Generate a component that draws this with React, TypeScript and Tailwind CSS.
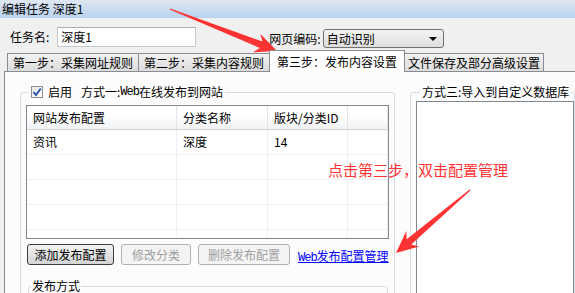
const FONT = { fontFamily: '"Noto Sans CJK SC", "Liberation Sans", sans-serif' };
const MONO = { fontFamily: '"Liberation Mono", monospace' };

type Pt = [number, number];

function arrowPoints(tail: Pt, tip: Pt) {
  const dx = tip[0] - tail[0];
  const dy = tip[1] - tail[1];
  const len = Math.hypot(dx, dy);
  const ux = dx / len;
  const uy = dy / len;
  const nx = -uy;
  const ny = ux;
  const headLen = 22;
  const headW = 10;
  const bx = tip[0] - ux * headLen;
  const by = tip[1] - uy * headLen;
  const nbx = bx + ux * 5;
  const nby = by + uy * 5;
  const p = (x: number, y: number) => `${x.toFixed(1)},${y.toFixed(1)}`;
  return [
    p(tail[0] + nx * 0.6, tail[1] + ny * 0.6),
    p(nbx + nx * 3.5, nby + ny * 3.5),
    p(bx + nx * headW, by + ny * headW),
    p(tip[0], tip[1]),
    p(bx - nx * headW, by - ny * headW),
    p(nbx - nx * 3.5, nby - ny * 3.5),
    p(tail[0] - nx * 0.6, tail[1] - ny * 0.6),
  ].join(" ");
}

const COLS = [
  { label: "网站发布配置", w: "w-[150px]" },
  { label: "分类名称", w: "w-[91px]" },
  { label: "版块/分类ID", w: "w-[80px]" },
  { label: "", w: "flex-1" },
];

const ROWS = [["资讯", "深度", "14", ""], ["", "", "", ""], ["", "", "", ""], ["", "", "", ""], ["", "", "", ""]];

function Tab({ label, active, px }: { label: string; active?: boolean; px?: string }) {
  if (active) {
    return (
      <div className="h-[22px] -mb-px px-[7px] border border-b-0 border-[#898c95] bg-white flex items-center relative z-10 -mr-px">
        {label}
      </div>
    );
  }
  return (
    <div className={`h-[18px] ${px ?? "px-[5px]"} border border-b-0 border-[#898c95] bg-gradient-to-b from-[#f2f2f2] to-[#dcdcdc] flex items-center -mr-px`}>
      {label}
    </div>
  );
}

function Btn({ label, w, disabled, def }: { label: string; w: string; disabled?: boolean; def?: boolean }) {
  const cls = disabled
    ? "border-[#adb2b5] bg-[#f4f4f4] text-[#a0a0a0]"
    : def
      ? "border-[#3c3c3c] bg-gradient-to-b from-[#f2f2f2] to-[#d4d4d4] text-black"
      : "border-[#707070] bg-gradient-to-b from-[#f2f2f2] to-[#dcdcdc] text-black";
  return (
    <div className={`h-[21px] ${w} rounded-[3px] border flex items-center justify-center ${cls}`}>{label}</div>
  );
}

export default function App() {
  return (
    <div className="w-[575px] h-[293px] overflow-hidden bg-[#f0f0f0] relative text-[12px] text-black leading-none" style={FONT}>
      {/* title bar */}
      <div className="h-[18px] bg-gradient-to-b from-[#dfe7f1] to-[#b8d2ee] flex items-center pl-[2px]">编辑任务 深度1</div>

      {/* name + encoding */}
      <div className="flex items-center pt-[7px] h-[31px]">
        <span className="ml-[10px]">任务名:</span>
        <div className="ml-[8px] w-[139px] h-[20px] bg-white border border-[#c5c9d0] border-t-[#abadb3] flex items-center pl-[3px]">深度1</div>
        <span className="ml-[73px] mt-[3px]">网页编码:</span>
        <div className="ml-[2px] mt-[3px] w-[121px] h-[19px] rounded-[3px] border border-[#707070] bg-gradient-to-b from-[#f4f4f4] to-[#dddddd] flex items-center justify-between pl-[3px] pr-[6px]">
          <span>自动识别</span>
          <span className="w-0 h-0 border-l-[4px] border-r-[4px] border-t-[4px] border-l-transparent border-r-transparent border-t-black" />
        </div>
      </div>

      {/* tabs */}
      <div className="flex items-end pl-[7px] h-[22px]">
        <Tab label="第一步：采集网址规则" />
        <Tab label="第二步：采集内容规则" />
        <Tab label="第三步：发布内容设置" active />
        <Tab label="文件保存及部分高级设置" px="px-[3px]" />
      </div>

      {/* tab page */}
      <div className="ml-[4px] h-[300px] border-t border-l border-[#898c95] bg-[#fcfcfc] flex items-start pl-[15px] pt-[13px]">
        <fieldset className="w-[379px] h-[240px] border border-[#d5dfe5] rounded-[3px] px-[5px]">
          <legend className="ml-[3px] px-[2px] h-[14px] flex items-center">
            <span className="w-[12px] h-[12px] border border-[#8f8f8f] bg-gradient-to-br from-[#e8e8e8] to-white flex items-center justify-center mr-[5px]">
              <svg width="10" height="10" viewBox="0 0 10 10">
                <path d="M1.5 5.2 L4 8 L8.8 1.5" fill="none" stroke="#2a4fa8" strokeWidth="1.8" />
              </svg>
            </span>
            <span>启用</span>
            <span className="ml-[9px]">方式一:</span>
            <span style={MONO} className="text-[12px] tracking-[-1px]">Web</span>
            <span>在线发布到网站</span>
          </legend>

          <div className="mt-[6px] w-[363px] h-[134px] border border-[#828790] bg-white overflow-hidden flex flex-col">
            <div className="h-[24px] flex border-b border-[#d5d5d5] bg-gradient-to-b from-white from-40% to-[#f1f2f4] shrink-0">
              {COLS.map((c, i) => (
                <div key={i} className={`${c.w} border-r border-[#e3e4e6] flex items-center pl-[6px]`}>
                  {c.label}
                </div>
              ))}
            </div>
            {ROWS.map((r, ri) => (
              <div key={ri} className="h-[25px] flex border-b border-[#f0f0f0] shrink-0">
                {r.map((v, ci) => (
                  <div key={ci} className={`${COLS[ci].w} border-r border-[#f0f0f0] flex items-center pl-[6px]`}>
                    {v}
                  </div>
                ))}
              </div>
            ))}
          </div>

          <div className="mt-[5px] flex items-center gap-[7px] pl-[1px]">
            <Btn label="添加发布配置" w="w-[87px]" def />
            <Btn label="修改分类" w="w-[70px]" disabled />
            <Btn label="删除发布配置" w="w-[92px]" disabled />
            <span className="ml-[1px] mt-[4px] text-[#0000ff] underline">
              <span style={MONO} className="text-[12px] tracking-[-1px]">Web</span>
              发布配置管理
            </span>
          </div>

          <fieldset className="mt-[14px] ml-[2px] w-[360px] h-[40px] border border-[#d5dfe5] rounded-[3px]">
            <legend className="ml-[2px] px-[1px] h-[14px] flex items-center">发布方式</legend>
          </fieldset>
        </fieldset>

        <fieldset className="ml-[15px] w-[200px] h-[240px] border border-[#d5dfe5] rounded-[3px] pl-[5px]">
          <legend className="ml-[4px] px-[2px] h-[14px] flex items-center">方式三:导入到自定义数据库</legend>
          <div className="mt-[2px] h-[220px] border border-[#828790] bg-white" />
        </fieldset>
      </div>

      {/* annotation */}
      <div className="absolute left-[328px] top-[162px] text-[15px] text-[#ff3333]">点击第三步，双击配置管理</div>
      <svg className="absolute left-0 top-0 pointer-events-none" width="575" height="293">
        <polygon points={arrowPoints([170, 9], [277, 51])} fill="#ff3333" />
        <polygon points={arrowPoints([470, 190], [396, 253])} fill="#ff3333" />
      </svg>
    </div>
  );
}
